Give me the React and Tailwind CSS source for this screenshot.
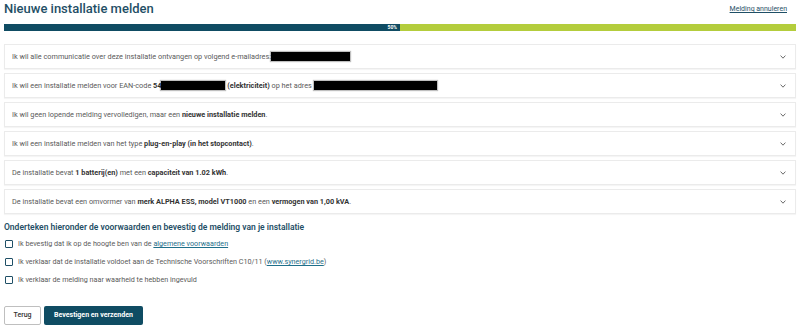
import React from "react";

const Chevron = () => (
  <svg width="6" height="4" viewBox="0 0 6 4" className="shrink-0">
    <polyline points="0.6,0.6 3,3.2 5.4,0.6" fill="none" stroke="#6b6b6b" strokeWidth="1" />
  </svg>
);

const Redact = ({ w }) => (
  <span className="inline-block h-[9px] bg-black align-middle shadow-[0_0_1px_1px_rgba(0,0,0,0.25)]" style={{ width: w }} />
);

const Card = ({ children }) => (
  <div className="h-[25px] border border-[#ebebeb] shadow-[0_1px_1px_rgba(0,0,0,0.04)] flex items-center justify-between pl-[7px] pr-[9px] bg-white">
    <div className="text-[7.3px] text-[#5a5a5a] leading-none flex items-center whitespace-nowrap">{children}</div>
    <Chevron />
  </div>
);

const B = ({ children }) => <span className="font-bold text-[#333]">{children}</span>;

const Check = ({ children }) => (
  <div className="flex items-center h-[18px]">
    <span className="w-[8px] h-[8px] border border-[#1f4f66] rounded-[1px] bg-white ml-[1px] mr-[5px] shrink-0" />
    <span className="text-[7.2px] text-[#5a5a5a] leading-none">{children}</span>
  </div>
);

export default function App() {
  return (
    <div className="w-[800px] h-[331px] bg-white px-[4px] font-['Roboto',sans-serif] overflow-hidden">
      <div className="flex justify-between items-start h-[24px] pt-[1px]">
        <h1 className="text-[13px] font-medium text-[#1f4f66] leading-[16px]">Nieuwe installatie melden</h1>
        <a className="text-[7px] text-[#1f4f66] underline mt-[5px] mr-[9px] leading-none">Melding annuleren</a>
      </div>
      <div className="h-[7px] flex">
        <div className="w-[396px] bg-[#0f4c63] flex items-center justify-end pr-[3px]">
          <span className="text-[5px] font-bold text-white leading-none">50%</span>
        </div>
        <div className="flex-1 bg-[#b4cd3c]" />
      </div>
      <div className="mt-[13px] flex flex-col gap-[4px]">
        <Card>
          Ik wil alle communicatie over deze installatie ontvangen op volgend e-mailadres:
          <Redact w="79px" />
        </Card>
        <Card>
          Ik wil een installatie melden voor EAN-code&nbsp;<B>54</B>
          <Redact w="64px" />
          &nbsp;<B>(elektriciteit)</B>&nbsp;op het adres&nbsp;
          <Redact w="123px" />
        </Card>
        <Card>
          Ik wil geen lopende melding vervolledigen, maar een&nbsp;<B>nieuwe installatie melden</B>.
        </Card>
        <Card>
          Ik wil een installatie melden van het type&nbsp;<B>plug-en-play (in het stopcontact)</B>.
        </Card>
        <Card>
          De installatie bevat&nbsp;<B>1 batterij(en)</B>&nbsp;met een&nbsp;<B>capaciteit van 1.02 kWh</B>.
        </Card>
        <Card>
          De installatie bevat een omvormer van&nbsp;<B>merk ALPHA ESS, model VT1000</B>&nbsp;en een&nbsp;<B>vermogen van 1,00 kVA</B>.
        </Card>
      </div>
      <h2 className="mt-[7px] text-[8.5px] font-semibold text-[#1f4f66] leading-[12px]">
        Onderteken hieronder de voorwaarden en bevestig de melding van je installatie
      </h2>
      <div className="mt-[2px] flex flex-col">
        <Check>
          Ik bevestig dat ik op de hoogte ben van de <a className="text-[#1f6f8a] underline">algemene voorwaarden</a>
        </Check>
        <Check>
          Ik verklaar dat de installatie voldoet aan de Technische Voorschriften C10/11 (<a className="text-[#1f6f8a] underline">www.synergrid.be</a>)
        </Check>
        <Check>Ik verklaar de melding naar waarheid te hebben ingevuld</Check>
      </div>
      <div className="mt-[17px] flex gap-[3px]">
        <button className="h-[19px] w-[37px] border border-[#bfbfbf] rounded-[2px] bg-white text-[7px] font-medium text-[#333] leading-none">
          Terug
        </button>
        <button className="h-[19px] w-[99px] rounded-[2px] bg-[#0f4c63] text-[7px] font-bold text-white leading-none">
          Bevestigen en verzenden
        </button>
      </div>
    </div>
  );
}
